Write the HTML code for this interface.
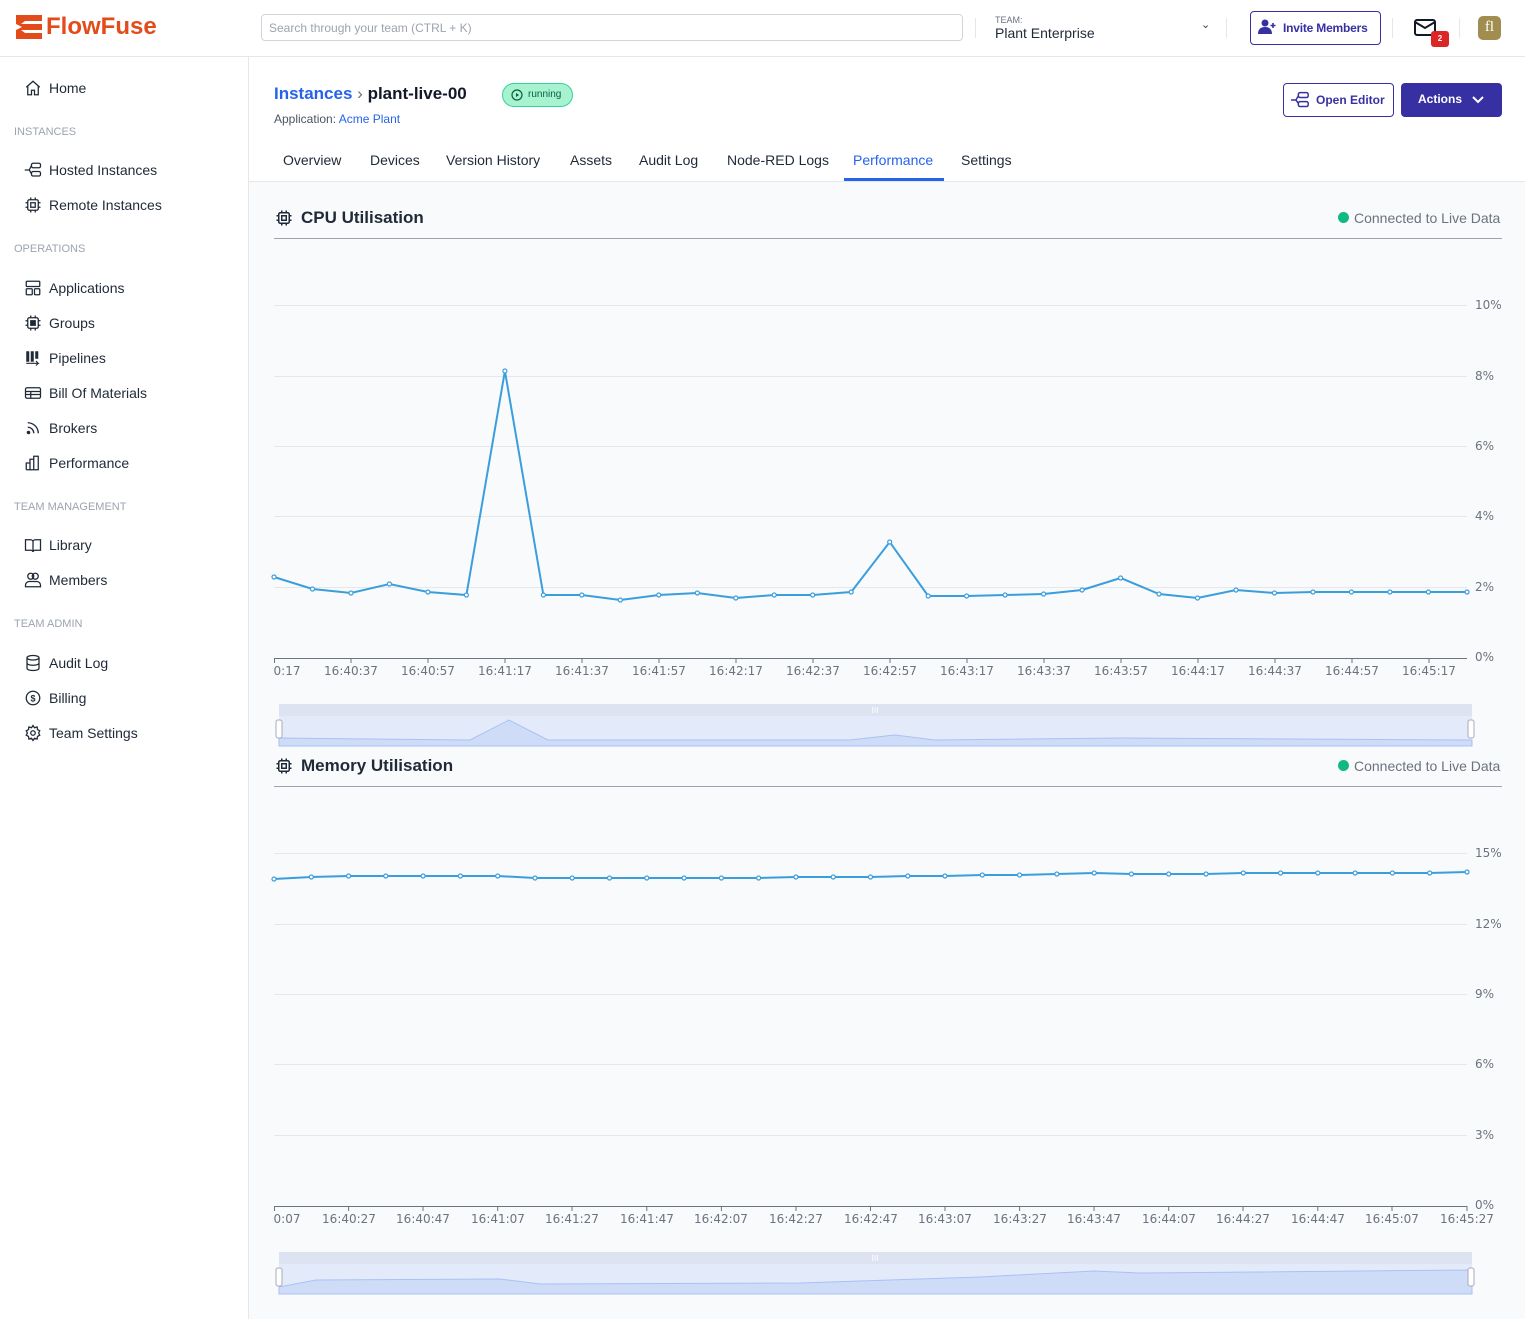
<!DOCTYPE html>
<html><head><meta charset="utf-8"><style>
*{box-sizing:border-box;margin:0;padding:0}
body{width:1525px;height:1319px;overflow:hidden;font-family:"Liberation Sans",sans-serif;color:#1f2937;background:#fff;position:relative}
.hdr{position:absolute;left:0;top:0;width:1525px;height:57px;border-bottom:1px solid #e5e7eb;background:#fff}
.side{position:absolute;left:0;top:57px;width:249px;height:1262px;border-right:1px solid #e5e7eb;background:#fff}
.main{position:absolute;left:249px;top:57px;right:0;bottom:0;background:#f9fafb}
.top{position:absolute;left:249px;top:57px;right:0;height:125px;background:#fff;border-bottom:1px solid #e5e7eb}
.nav{position:absolute;left:24px;font-size:14px;color:#1f2937;display:flex;align-items:center;gap:7px}
.nav svg{width:18px;height:18px}
.sec{position:absolute;left:14px;font-size:11px;color:#9ca3af}
.tab{position:absolute;top:152px;font-size:14px;color:#1f2937}
.a{position:absolute}
</style></head><body>
<div class="hdr"></div>
<div class="side"></div>
<div class="main"></div>
<div class="top"></div>

<svg class="a" style="left:16px;top:15px" width="26" height="24" viewBox="0 0 26 24"><path d="M0 0h26v6H9l-4 3h21v6H5l4 3h17v6H0z" fill="#e34b1a"/><path d="M0 9l6 3-6 3z" fill="#fff"/></svg>
<div class="a" style="left:46px;top:13px;font-size:24px;font-weight:bold;color:#e34b1a">FlowFuse</div>
<div class="a" style="left:261px;top:14px;width:702px;height:27px;border:1px solid #d1d5db;border-radius:4px;font-size:12px;color:#9ca3af;padding:6px 7px">Search through your team (CTRL + K)</div>
<div class="a" style="left:975px;top:18px;width:1px;height:20px;background:#e5e7eb"></div>
<div class="a" style="left:995px;top:15px;font-size:9px;color:#6b7280">TEAM:</div>
<div class="a" style="left:995px;top:25px;font-size:14px;color:#1f2937">Plant Enterprise</div>
<div class="a" style="left:1201px;top:18px;font-size:11px;color:#374151">&#8964;</div>
<div class="a" style="left:1226px;top:18px;width:1px;height:20px;background:#e5e7eb"></div>
<div class="a" style="left:1250px;top:11px;width:131px;height:34px;border:1px solid #3730a3;border-radius:4px;font-size:12px;font-weight:bold;color:#3730a3;padding:9px 0 0 32px;letter-spacing:-0.2px">Invite Members</div>
<svg class="a" style="left:1258px;top:19px" width="18" height="16" viewBox="0 0 18 16"><circle cx="7" cy="4" r="3.5" fill="#3730a3"/><path d="M0 15c0-5 3-7 7-7s7 2 7 7z" fill="#3730a3"/><path d="M15 4v5M12.5 6.5h5" stroke="#3730a3" stroke-width="1.6"/></svg>
<div class="a" style="left:1392px;top:18px;width:1px;height:20px;background:#e5e7eb"></div>
<svg class="a" style="left:1414px;top:19px" width="22" height="17" viewBox="0 0 22 17"><rect x="1" y="1" width="20" height="15" rx="2" fill="none" stroke="#111827" stroke-width="2"/><path d="M1 3l10 6 10-6" fill="none" stroke="#111827" stroke-width="2"/></svg>
<div class="a" style="left:1431px;top:31px;width:18px;height:16px;background:#dc2626;border-radius:3px;color:#fff;font-size:8px;font-weight:bold;text-align:center;line-height:16px">2</div>
<div class="a" style="left:1459px;top:18px;width:1px;height:20px;background:#e5e7eb"></div>
<div class="a" style="left:1478px;top:16px;width:23px;height:24px;background:#a08d4f;border-radius:5px;color:#fff;font-family:'Liberation Serif',serif;font-size:15px;text-align:center;line-height:23px">fl</div>

<div class="nav" style="top:79px"><svg viewBox="0 0 24 24" fill="none" stroke="#1f2937" stroke-width="1.7"><path d="M3 11l9-8 9 8M5 9v12h5v-6h4v6h5V9"/></svg>Home</div>
<div class="sec" style="top:126px">INSTANCES</div>
<div class="nav" style="top:161px"><svg viewBox="0 0 24 24" fill="none" stroke="#1f2937" stroke-width="1.7"><rect x="10" y="3" width="12" height="6" rx="2"/><rect x="10" y="14" width="12" height="6" rx="2"/><path d="M1 12h6l3-6M7 12l3 5"/></svg>Hosted Instances</div>
<div class="nav" style="top:196px"><svg viewBox="0 0 24 24" fill="none" stroke="#1f2937" stroke-width="1.7"><rect x="5" y="5" width="14" height="14" rx="2"/><rect x="9" y="9" width="6" height="6"/><path d="M9 2v3M15 2v3M9 19v3M15 19v3M2 9h3M2 15h3M19 9h3M19 15h3"/></svg>Remote Instances</div>
<div class="sec" style="top:243px">OPERATIONS</div>
<div class="nav" style="top:279px"><svg viewBox="0 0 24 24" fill="none" stroke="#1f2937" stroke-width="1.7"><rect x="3" y="3" width="18" height="7" rx="1"/><rect x="3" y="13" width="8" height="8" rx="1"/><rect x="14" y="13" width="7" height="8" rx="1"/></svg>Applications</div>
<div class="nav" style="top:314px"><svg viewBox="0 0 24 24" fill="none" stroke="#1f2937" stroke-width="1.7"><rect x="5" y="5" width="14" height="14" rx="2"/><rect x="9" y="9" width="6" height="6" fill="#1f2937"/><path d="M9 2v3M15 2v3M9 19v3M15 19v3M2 9h3M2 15h3M19 9h3M19 15h3"/></svg>Groups</div>
<div class="nav" style="top:349px"><svg viewBox="0 0 24 24" fill="#1f2937"><rect x="3" y="3" width="4" height="14"/><rect x="9" y="3" width="4" height="14"/><rect x="15" y="3" width="4" height="10"/><path d="M3 19h16l-3-3M19 19l-3 3" stroke="#1f2937" stroke-width="1.5" fill="none"/></svg>Pipelines</div>
<div class="nav" style="top:384px"><svg viewBox="0 0 24 24" fill="none" stroke="#1f2937" stroke-width="1.7"><rect x="2" y="5" width="20" height="14" rx="2"/><path d="M2 10h20M2 14h20M9 10v9"/></svg>Bill Of Materials</div>
<div class="nav" style="top:419px"><svg viewBox="0 0 24 24" fill="none" stroke="#1f2937" stroke-width="1.8"><path d="M5 5a14 14 0 0 1 14 14M5 11a8 8 0 0 1 8 8"/><circle cx="6" cy="18" r="1.5" fill="#1f2937"/></svg>Brokers</div>
<div class="nav" style="top:454px"><svg viewBox="0 0 24 24" fill="none" stroke="#1f2937" stroke-width="1.7"><path d="M3 21V12h5v9M8 21V7h5v14M13 21V3h6v18H3"/></svg>Performance</div>
<div class="sec" style="top:501px">TEAM MANAGEMENT</div>
<div class="nav" style="top:536px"><svg viewBox="0 0 24 24" fill="none" stroke="#1f2937" stroke-width="1.7"><path d="M2 5h7a3 3 0 0 1 3 3v13a3 3 0 0 0-3-2H2zM22 5h-7a3 3 0 0 0-3 3v13a3 3 0 0 1 3-2h7z"/></svg>Library</div>
<div class="nav" style="top:571px"><svg viewBox="0 0 24 24" fill="none" stroke="#1f2937" stroke-width="1.7"><circle cx="9" cy="7" r="4"/><circle cx="15" cy="7" r="4"/><path d="M2 21v-2a5 5 0 0 1 5-5h10a5 5 0 0 1 5 5v2z"/></svg>Members</div>
<div class="sec" style="top:618px">TEAM ADMIN</div>
<div class="nav" style="top:654px"><svg viewBox="0 0 24 24" fill="none" stroke="#1f2937" stroke-width="1.7"><ellipse cx="12" cy="5" rx="8" ry="3"/><path d="M4 5v14c0 2 4 3 8 3s8-1 8-3V5M4 12c0 2 4 3 8 3s8-1 8-3"/></svg>Audit Log</div>
<div class="nav" style="top:689px"><svg viewBox="0 0 24 24" fill="none" stroke="#1f2937" stroke-width="1.7"><circle cx="12" cy="12" r="9"/><text x="12" y="16.5" font-size="12" text-anchor="middle" fill="#1f2937" stroke="none" font-weight="bold">$</text></svg>Billing</div>
<div class="nav" style="top:724px"><svg viewBox="0 0 24 24" fill="none" stroke="#1f2937" stroke-width="1.7"><circle cx="12" cy="12" r="3"/><path d="M12 2l2 3 3.5-1 .5 3.5L21 9l-1.5 3 1.5 3-3 1.5-.5 3.5-3.5-1-2 3-2-3-3.5 1-.5-3.5L3 15l1.5-3L3 9l3-1.5L6.5 4 10 5z"/></svg>Team Settings</div>

<div class="a" style="left:274px;top:84px;font-size:17px;font-weight:bold;color:#2563eb">Instances <span style="color:#6b7280;font-weight:normal">›</span> <span style="color:#111827">plant-live-00</span></div>
<div class="a" style="left:502px;top:83px;width:71px;height:24px;border:1px solid #34d399;background:#a7f3d0;border-radius:12px;font-size:10px;color:#065f46;padding:5px 0 0 25px">running</div>
<svg class="a" style="left:511px;top:89px" width="12" height="12" viewBox="0 0 12 12"><circle cx="6" cy="6" r="5" fill="none" stroke="#065f46" stroke-width="1.2"/><path d="M5 4l3 2-3 2z" fill="#065f46"/></svg>
<div class="a" style="left:274px;top:112px;font-size:12px;color:#4b5563">Application: <span style="color:#2563eb">Acme Plant</span></div>
<div class="a" style="left:1283px;top:83px;width:111px;height:34px;border:1px solid #3730a3;border-radius:4px;background:#fff;font-size:12px;font-weight:bold;color:#3730a3;padding:9px 0 0 32px">Open Editor</div>
<svg class="a" style="left:1290px;top:91px" width="20" height="18" viewBox="0 0 24 22" fill="none" stroke="#3730a3" stroke-width="1.8"><rect x="10" y="2" width="12" height="6" rx="2"/><rect x="10" y="13" width="12" height="6" rx="2"/><path d="M1 11h6l3-5M7 11l3 4"/></svg>
<div class="a" style="left:1401px;top:83px;width:101px;height:34px;background:#3730a3;border-radius:4px;font-size:12px;font-weight:bold;color:#fff;padding:9px 0 0 17px">Actions</div>
<svg class="a" style="left:1472px;top:95px" width="12" height="10" viewBox="0 0 12 10"><path d="M1 2l5 5 5-5" fill="none" stroke="#fff" stroke-width="2"/></svg>

<div class="tab" style="left:283px">Overview</div>
<div class="tab" style="left:370px">Devices</div>
<div class="tab" style="left:446px">Version History</div>
<div class="tab" style="left:570px">Assets</div>
<div class="tab" style="left:639px">Audit Log</div>
<div class="tab" style="left:727px">Node-RED Logs</div>
<div class="tab" style="left:853px;color:#2563eb">Performance</div>
<div class="tab" style="left:961px">Settings</div>
<div class="a" style="left:844px;top:178px;width:100px;height:3px;background:#2563eb"></div>

<svg class="a" style="left:275px;top:209px" width="18" height="18" viewBox="0 0 24 24" fill="none" stroke="#1f2937" stroke-width="2"><rect x="5" y="5" width="14" height="14" rx="2"/><rect x="9" y="9" width="6" height="6"/><path d="M9 2v3M15 2v3M9 19v3M15 19v3M2 9h3M2 15h3M19 9h3M19 15h3"/></svg>
<div class="a" style="left:301px;top:208px;font-size:17px;font-weight:bold;color:#1f2937">CPU Utilisation</div>
<div class="a" style="left:1338px;top:212px;width:11px;height:11px;border-radius:50%;background:#10b981"></div>
<div class="a" style="left:1354px;top:210px;font-size:14px;color:#6b7280">Connected to Live Data</div>
<div class="a" style="left:274px;top:238px;width:1228px;height:1px;background:#9ca3af"></div>

<svg class="a" style="left:275px;top:757px" width="18" height="18" viewBox="0 0 24 24" fill="none" stroke="#1f2937" stroke-width="2"><rect x="5" y="5" width="14" height="14" rx="2"/><rect x="9" y="9" width="6" height="6"/><path d="M9 2v3M15 2v3M9 19v3M15 19v3M2 9h3M2 15h3M19 9h3M19 15h3"/></svg>
<div class="a" style="left:301px;top:756px;font-size:17px;font-weight:bold;color:#1f2937">Memory Utilisation</div>
<div class="a" style="left:1338px;top:760px;width:11px;height:11px;border-radius:50%;background:#10b981"></div>
<div class="a" style="left:1354px;top:758px;font-size:14px;color:#6b7280">Connected to Live Data</div>
<div class="a" style="left:274px;top:786px;width:1228px;height:1px;background:#9ca3af"></div>

<svg class="a" style="left:0;top:0" width="1525" height="1319" font-family="DejaVu Sans, sans-serif" font-size="12" fill="#6b7280">
<defs><marker id="m" markerWidth="6" markerHeight="6" refX="3" refY="3" markerUnits="userSpaceOnUse"><circle cx="3" cy="3" r="2" fill="#fff" stroke="#3b9edc" stroke-width="1.2"/></marker></defs>
<g stroke="#e5e7eb" stroke-width="1">
<path d="M274 305.5H1467M274 376.5H1467M274 446.5H1467M274 516.5H1467M274 587.5H1467"/>
<path d="M274 853.5H1467M274 924.5H1467M274 994.5H1467M274 1064.5H1467M274 1135.5H1467"/>
</g>
<g text-anchor="start" font-size="12">
<text x="1475" y="309">10%</text><text x="1475" y="380">8%</text><text x="1475" y="450">6%</text><text x="1475" y="520">4%</text><text x="1475" y="591">2%</text><text x="1475" y="661">0%</text>
<text x="1475" y="857">15%</text><text x="1475" y="928">12%</text><text x="1475" y="998">9%</text><text x="1475" y="1068">6%</text><text x="1475" y="1139">3%</text><text x="1475" y="1209">0%</text>
</g>
<path d="M274 658.5H1467M274 1206.5H1467" stroke="#6b7280"/>
<g stroke="#6b7280"><path d="M274.5 658v5M351 658v5M428 658v5M505 658v5M582 658v5M659 658v5M736 658v5M813 658v5M890 658v5M967 658v5M1044 658v5M1121 658v5M1198 658v5M1275 658v5M1352 658v5M1429 658v5"/>
<path d="M274.5 1206v5M348.6 1206v5M423 1206v5M497.7 1206v5M572 1206v5M646.8 1206v5M721.4 1206v5M796 1206v5M870.5 1206v5M945 1206v5M1019.6 1206v5M1094 1206v5M1168.7 1206v5M1243 1206v5M1317.8 1206v5M1392 1206v5M1467 1206v5"/></g>
<g text-anchor="middle">
<text x="287" y="675">0:17</text><text x="351" y="675">16:40:37</text><text x="428" y="675">16:40:57</text><text x="505" y="675">16:41:17</text><text x="582" y="675">16:41:37</text><text x="659" y="675">16:41:57</text><text x="736" y="675">16:42:17</text><text x="813" y="675">16:42:37</text><text x="890" y="675">16:42:57</text><text x="967" y="675">16:43:17</text><text x="1044" y="675">16:43:37</text><text x="1121" y="675">16:43:57</text><text x="1198" y="675">16:44:17</text><text x="1275" y="675">16:44:37</text><text x="1352" y="675">16:44:57</text><text x="1429" y="675">16:45:17</text>
<text x="287" y="1223">0:07</text><text x="349" y="1223">16:40:27</text><text x="423" y="1223">16:40:47</text><text x="498" y="1223">16:41:07</text><text x="572" y="1223">16:41:27</text><text x="647" y="1223">16:41:47</text><text x="721" y="1223">16:42:07</text><text x="796" y="1223">16:42:27</text><text x="871" y="1223">16:42:47</text><text x="945" y="1223">16:43:07</text><text x="1020" y="1223">16:43:27</text><text x="1094" y="1223">16:43:47</text><text x="1169" y="1223">16:44:07</text><text x="1243" y="1223">16:44:27</text><text x="1318" y="1223">16:44:47</text><text x="1392" y="1223">16:45:07</text><text x="1467" y="1223">16:45:27</text>
</g>
<polyline fill="none" stroke="#3b9edc" stroke-width="2" marker-start="url(#m)" marker-mid="url(#m)" marker-end="url(#m)" points="274,577 312.5,589 351,593 389.4,584 427.9,592 466.4,595 504.9,371 543.4,595 581.8,595 620.3,600 658.8,595 697.3,593 735.8,598 774.2,595 812.7,595 851.2,592 889.7,542 928.2,596 966.6,596 1005.1,595 1043.6,594 1082.1,590 1120.6,578 1159,594 1197.5,598 1236,590 1274.5,593 1313,592 1351.4,592 1389.9,592 1428.4,592 1467,592"/>
<polyline fill="none" stroke="#3b9edc" stroke-width="2" marker-start="url(#m)" marker-mid="url(#m)" marker-end="url(#m)" points="274,879 311.3,877 348.6,876 385.8,876 423.1,876 460.4,876 497.7,876 535,878 572.2,878 609.5,878 646.8,878 684.1,878 721.4,878 758.6,878 795.9,877 833.2,877 870.5,877 907.8,876 945,876 982.3,875 1019.6,875 1056.9,874 1094.2,873 1131.4,874 1168.7,874 1206,874 1243.3,873 1280.6,873 1317.8,873 1355.1,873 1392.4,873 1429.7,873 1467,872"/>
<rect x="279" y="704" width="1193" height="12" fill="#dde3f0"/>
<rect x="279" y="716" width="1193" height="30" fill="#e3ebfb"/>
<path d="M279 738L470 740L509 720L548 740L850 740L895 735L935 740L1120 738L1472 740V746H279Z" fill="#cfdcf8" stroke="#a9c1f3"/>
<text x="875" y="713" font-size="8" fill="#fff" text-anchor="middle">III</text>
<rect x="276" y="720" width="6" height="18" rx="2" fill="#fff" stroke="#aab"/>
<rect x="1468" y="720" width="6" height="18" rx="2" fill="#fff" stroke="#aab"/>
<rect x="279" y="1252" width="1193" height="12" fill="#dde3f0"/>
<rect x="279" y="1264" width="1193" height="30" fill="#e3ebfb"/>
<path d="M279 1287L316 1280L500 1279L540 1284L800 1283L980 1277L1094 1271L1140 1273L1472 1270V1294H279Z" fill="#cfdcf8" stroke="#a9c1f3"/>
<text x="875" y="1261" font-size="8" fill="#fff" text-anchor="middle">III</text>
<rect x="276" y="1268" width="6" height="18" rx="2" fill="#fff" stroke="#aab"/>
<rect x="1468" y="1268" width="6" height="18" rx="2" fill="#fff" stroke="#aab"/>
</svg>
</body></html>
